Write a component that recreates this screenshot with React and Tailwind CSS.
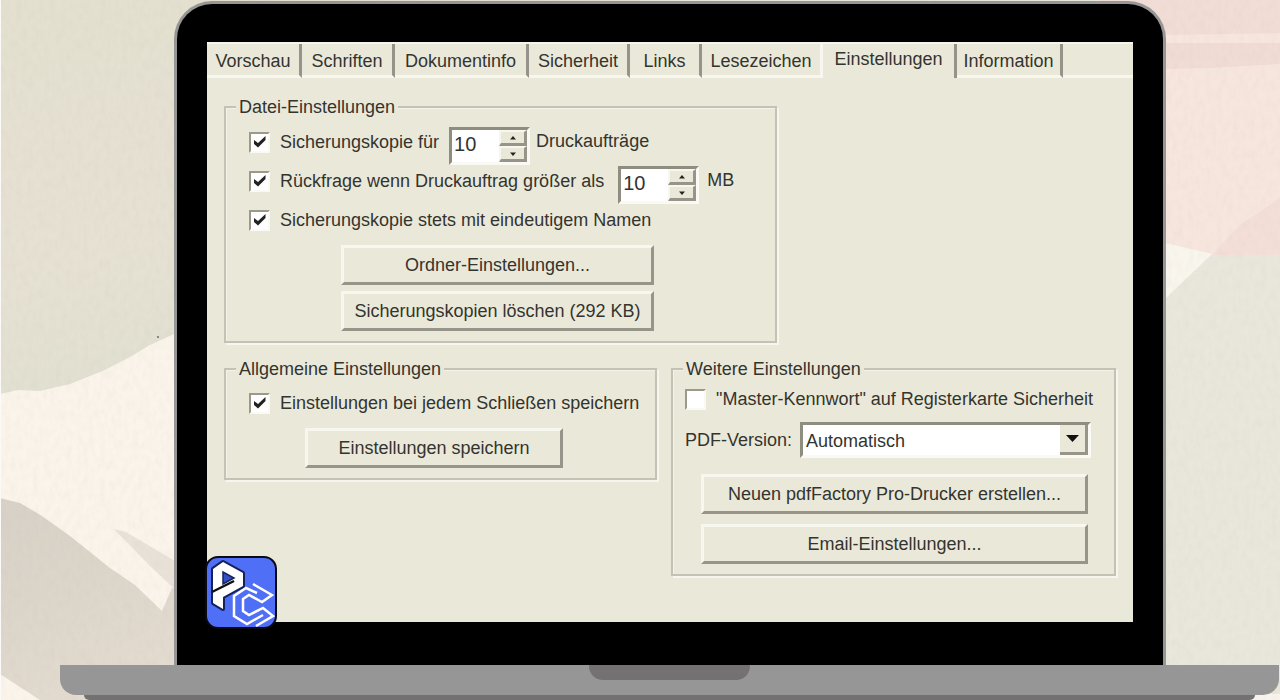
import React, { useState } from 'react';

const TABS = [
  { name: 'Vorschau', width: 'w-[95px]' },
  { name: 'Schriften', width: 'w-[93px]' },
  { name: 'Dokumentinfo', width: 'w-[134px]' },
  { name: 'Sicherheit', width: 'w-[101px]' },
  { name: 'Links', width: 'w-[72px]' },
  { name: 'Lesezeichen', width: 'w-[121px]' },
  { name: 'Einstellungen', width: 'w-[134px]' },
  { name: 'Information', width: 'w-[106px]' },
];

function PaperBackground() {
  return (
    <svg className="absolute inset-0 w-full h-full" viewBox="0 0 1280 700" preserveAspectRatio="none" aria-hidden="true">
      <defs>
        <linearGradient id="sage" x1="0" y1="0" x2="0.3" y2="1">
          <stop offset="0" stopColor="#e4e0d0" />
          <stop offset="0.6" stopColor="#e6e1d3" />
          <stop offset="1" stopColor="#dfe0d0" />
        </linearGradient>
        <linearGradient id="stone" x1="0" y1="0" x2="0.4" y2="1">
          <stop offset="0" stopColor="#d7d1c7" />
          <stop offset="0.5" stopColor="#dcd5ca" />
          <stop offset="1" stopColor="#e3dbcf" />
        </linearGradient>
        <filter id="grain" x="0" y="0" width="100%" height="100%">
          <feTurbulence type="fractalNoise" baseFrequency="0.18 0.1" numOctaves="3" seed="4" />
          <feColorMatrix values="0 0 0 0 0.45  0 0 0 0 0.4  0 0 0 0 0.33  0.6 0 0 0 -0.22" />
        </filter>
      </defs>
      <rect width="1280" height="700" fill="#e9e7db" />
      <rect width="640" height="420" fill="url(#sage)" />
      <path d="M0 394 L18 390 L40 391 L70 384 L105 370 L130 357 L150 345 L174 334 H640 V700 H0Z" fill="#fbf4eb" />
      <path d="M0 498 L20 503 L42 516 L70 536 L110 568 L135 585 L162 611 L172 588 L180 590 V700 H40 L0 674Z" fill="url(#stone)" />
      <path d="M114 529 L126 532 L180 564 V594 L150 566Z" fill="#e9e2d8" />
      <path d="M1100 0 H1280 V255 H1212 L1166 243 H1100Z" fill="#f7e6de" />
      <path d="M1100 0 H1280 V33 L1166 35 H1100Z" fill="#f1ddd5" />
      <path d="M1166 43 L1280 43 V64 L1210 68 L1166 69Z" fill="#f1dcd5" />
      <path d="M1212 255 L1240 225 L1280 198 V255Z" fill="#f3dfd7" />
      <path d="M1150 238 L1166 243 L1212 254 L1166 298 H1150Z" fill="#f9f6ee" />
      <path d="M1240 700 L1260 694 H1280 V700Z" fill="#f8f3ec" />
      <rect width="1280" height="700" filter="url(#grain)" opacity="0.25" />
      <circle cx="158" cy="337" r="1" fill="#6f6b62" />
      <rect width="1" height="700" fill="#fbfaf8" />
    </svg>
  );
}

function Group({ title, className, children }) {
  return (
    <fieldset
      className={`min-w-0 border-2 border-[#c4c2b4] px-[10px] shadow-[inset_1px_1px_0_#f3f2e8,2px_2px_0_#f6f5ee] ${className}`}
    >
      <legend className="bg-[#eae9d9] px-[3px] leading-6">{title}</legend>
      {children}
    </fieldset>
  );
}

function Check({ label, checked = false }) {
  const [on, setOn] = useState(checked);
  return (
    <label className="flex h-[30px] items-center gap-[10px] whitespace-nowrap">
      <span className="relative block h-[21px] w-[21px] shrink-0">
        <input
          type="checkbox"
          checked={on}
          onChange={(e) => setOn(e.target.checked)}
          className="peer block h-[21px] w-[21px] appearance-none border-2 border-b-[#faf9f4] border-l-[#9b998b] border-r-[#faf9f4] border-t-[#9b998b] bg-white"
        />
        <svg className="pointer-events-none absolute inset-0 hidden peer-checked:block" width="21" height="21" viewBox="0 0 21 21">
          <path d="M5 8 L9 11 L16.5 4 V8 L9 15.5 L5 12Z" fill="#222" />
        </svg>
      </span>
      <span>{label}</span>
    </label>
  );
}

function PushButton({ className, children }) {
  return (
    <button
      type="button"
      className={`h-10 border-[3px] border-b-[#97958a] border-l-[#f8f7ef] border-r-[#97958a] border-t-[#f8f7ef] bg-[#eae9d9] text-center leading-6 whitespace-nowrap ${className}`}
    >
      {children}
    </button>
  );
}

function StepButton({ label, onClick, children }) {
  return (
    <button
      type="button"
      aria-label={label}
      onClick={onClick}
      className="flex flex-1 items-center justify-center border-b-[3px] border-l-2 border-r-[3px] border-t-2 border-b-[#97958a] border-l-[#f8f7ef] border-r-[#97958a] border-t-[#f8f7ef] bg-[#eae9d9]"
    >
      <svg width="6" height="4" viewBox="0 0 6 4">{children}</svg>
    </button>
  );
}

function Spinner({ label }) {
  const [value, setValue] = useState(10);
  return (
    <div className="flex h-[38px] w-[81px] border-[3px] border-b-[#faf9f4] border-l-[#8f8d7f] border-r-[#faf9f4] border-t-[#8f8d7f] bg-white">
      <input
        aria-label={label}
        value={value}
        onChange={(e) => setValue(Number(e.target.value) || 0)}
        className="h-7 w-12 min-w-0 bg-white pl-0.5 text-[20px] outline-none"
      />
      <div className="flex w-7 shrink-0 flex-col">
        <StepButton label="Mehr" onClick={() => setValue(value + 1)}>
          <path d="M3 0 L6 3.5 H0Z" fill="#222" />
        </StepButton>
        <StepButton label="Weniger" onClick={() => setValue(value - 1)}>
          <path d="M0 0.5 H6 L3 4Z" fill="#222" />
        </StepButton>
      </div>
    </div>
  );
}

function TabBar({ active, onSelect }) {
  return (
    <div role="tablist" className="flex h-[36px] border-t-2 border-t-[#f6f5ec]">
      {TABS.map((tab, i) => {
        const current = i === active;
        const edge = i === active - 1 ? 'border-r-[#f8f7ef]' : 'border-r-[#96948a]';
        return (
          <button
            key={tab.name}
            type="button"
            role="tab"
            aria-selected={current}
            onClick={() => onSelect(i)}
            className={`${tab.width} shrink-0 border-r-[3px] text-center leading-6 ${edge} ${
              current ? 'pb-1' : 'border-b-[3px] border-b-[#f8f7ef] pt-0.5'
            }`}
          >
            {tab.name}
          </button>
        );
      })}
      <div className="flex-1 border-b-[3px] border-b-[#f8f7ef]" />
    </div>
  );
}

function Logo() {
  return (
    <svg className="absolute -bottom-[7px] -left-[2px]" width="72" height="73" viewBox="0 0 72 73" role="img" aria-label="PC">
      <rect x="1" y="1" width="70" height="71" rx="12" fill="#4f6ff6" stroke="#0a0a14" strokeWidth="2" />
      <g fill="none" stroke="#fff" strokeWidth="2.5" strokeLinejoin="miter">
        <path d="M48 28 L67 39 L57 46 L44 39 L38 43 V55 L44 59 L58 52 L68 60 L51 70" />
        <path d="M52 37 L41 32 L29 40 V60 L42 68 L58 59" />
      </g>
      <path
        d="M8 13 L18 6 L38 17 V30 L18 41 V53 L8 47 V36 L18 31 L8 35Z"
        fill="none"
        stroke="#16225c"
        strokeWidth="4"
        strokeLinejoin="round"
      />
      <path fillRule="evenodd" d="M8 13 L18 6 L38 17 V30 L18 41 V53 L8 47Z M18 16 V28 L29 22Z" fill="#fff" />
      <path d="M18 16 V28 L29 22Z" fill="#3450c4" stroke="#16225c" strokeWidth="1.5" />
      <path d="M7 36 L29 25" stroke="#111" strokeWidth="2.5" />
    </svg>
  );
}

function SettingsPage() {
  return (
    <div className="flex flex-col gap-3.5 px-[17px] pb-[46px] pt-[17px]">
      <Group title="Datei-Einstellungen" className="w-[553px] pb-[10px]">
        <div className="flex flex-col gap-px pl-[13px] pt-2">
          <div className="flex h-[38px] items-start">
            <Check label="Sicherungskopie für" checked />
            <div className="pl-[10px] pr-1.5">
              <Spinner label="Anzahl Druckaufträge" />
            </div>
            <span className="leading-[28px]">Druckaufträge</span>
          </div>
          <div className="flex h-[38px] items-start">
            <Check label="Rückfrage wenn Druckauftrag größer als" checked />
            <div className="pl-[14px] pr-2">
              <Spinner label="Größe in MB" />
            </div>
            <span className="leading-[28px]">MB</span>
          </div>
          <div className="flex h-[38px] items-start">
            <Check label="Sicherungskopie stets mit eindeutigem Namen" checked />
          </div>
        </div>
        <div className="flex flex-col gap-1.5 pl-[105px] pt-0.5">
          <PushButton className="w-[313px]">Ordner-Einstellungen...</PushButton>
          <PushButton className="w-[313px]">Sicherungskopien löschen (292 KB)</PushButton>
        </div>
      </Group>

      <div className="flex items-start gap-[14px]">
        <Group title="Allgemeine Einstellungen" className="w-[433px] pb-[10px]">
          <div className="flex flex-col gap-[10px] pl-[13px] pt-[7px]">
            <Check label="Einstellungen bei jedem Schließen speichern" checked />
            <PushButton className="ml-14 w-[258px]">Einstellungen speichern</PushButton>
          </div>
        </Group>

        <Group title="Weitere Einstellungen" className="flex-1 pb-[10px]">
          <div className="flex flex-col pl-0.5 pt-[3px]">
            <Check label={'"Master-Kennwort" auf Registerkarte Sicherheit'} />
            <div className="flex items-center gap-2 pt-2">
              <label htmlFor="pdf-version" className="whitespace-nowrap">PDF-Version:</label>
              <div className="relative mr-[13px] flex-1">
                <select
                  id="pdf-version"
                  className="block h-9 w-full appearance-none border-[3px] border-b-[#faf9f4] border-l-[#8f8d7f] border-r-[#faf9f4] border-t-[#8f8d7f] bg-white pl-[3px] pt-0.5 outline-none"
                >
                  <option>Automatisch</option>
                </select>
                <span className="pointer-events-none absolute bottom-[3px] right-[3px] top-[3px] flex w-7 items-center justify-center border-b-[3px] border-r-[3px] border-[#97958a] bg-[#eae9d9]">
                  <svg width="13" height="7" viewBox="0 0 13 7">
                    <path d="M0 0 H13 L6.5 7Z" fill="#111" />
                  </svg>
                </span>
              </div>
            </div>
            <div className="flex flex-col gap-[10px] pl-4 pr-4 pt-4">
              <PushButton className="w-full">Neuen pdfFactory Pro-Drucker erstellen...</PushButton>
              <PushButton className="w-full">Email-Einstellungen...</PushButton>
            </div>
          </div>
        </Group>
      </div>
    </div>
  );
}

export default function App() {
  const [active, setActive] = useState(6);
  return (
    <main className="relative min-h-screen overflow-hidden font-['Liberation_Sans',Arial,sans-serif] text-[18px] leading-6 text-[#34342f]">
      <PaperBackground />
      <div className="relative pl-[60px] pr-px pt-px">
        <div className="ml-[114px] mr-[113px] rounded-t-[38px] border-x-[3px] border-t-[3px] border-[#969696] bg-black px-[30px] pb-[43px] pt-[38px]">
          <div className="relative bg-[#eae9d9]">
            <TabBar active={active} onSelect={setActive} />
            <SettingsPage />
            <Logo />
          </div>
        </div>
        <div className="flex h-[30px] justify-center rounded-b-[16px] bg-[#969696]">
          <div className="h-[15px] w-[161px] rounded-b-[14px] bg-[#737171]" />
        </div>
        <div className="ml-6 mr-6 h-[5px] rounded-b-[14px] bg-[#737171]" />
      </div>
    </main>
  );
}
